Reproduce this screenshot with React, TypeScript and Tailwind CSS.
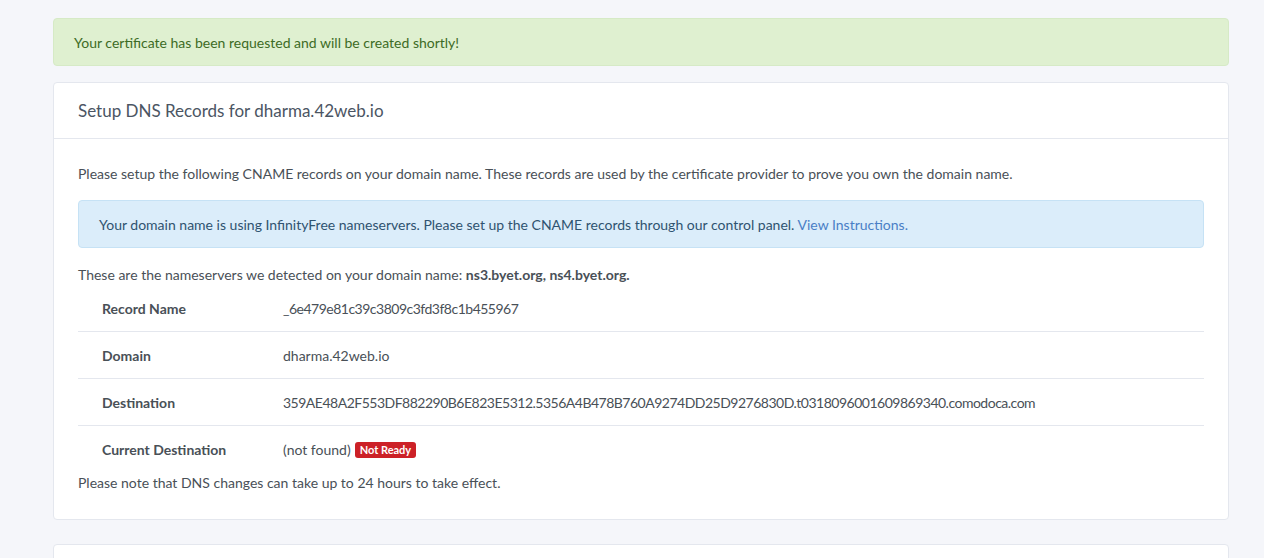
import React from 'react';

const rows: { label: string; value: React.ReactNode; tight?: boolean }[] = [
    { label: 'Record Name', value: '_6e479e81c39c3809c3fd3f8c1b455967', tight: true },
    { label: 'Domain', value: 'dharma.42web.io' },
    {
        label: 'Destination',
        value: '359AE48A2F553DF882290B6E823E5312.5356A4B478B760A9274DD25D9276830D.t0318096001609869340.comodoca.com',
        tight: true,
    },
    {
        label: 'Current Destination',
        value: (
            <span className="flex items-center gap-1">
                (not found)
                <span className="rounded-[3px] bg-[#cc2127] px-[5px] text-[11px] font-bold leading-[16px] text-white">Not Ready</span>
            </span>
        ),
    },
];

const App: React.FC = () => {
    return (
        <div className="min-h-[558px] bg-[#f5f6fa] pl-[53px] pr-[35px] pt-[18px] font-['Lato','Noto_Sans',sans-serif] text-[14px] text-[#495057]">
            {/* success alert */}
            <div className="flex h-[48px] items-center rounded-[4px] border border-[#d6eac6] bg-[#dff0d0] px-[20px] text-[#3d6b25]">
                Your certificate has been requested and will be created shortly!
            </div>

            {/* dns card */}
            <section className="mt-[16px] rounded-[4px] border border-[#e4e7ee] bg-white">
                <div className="flex h-[56px] items-center border-b border-[#e4e7ee] px-[24px] text-[17px] text-[#4b5563]">
                    Setup DNS Records for dharma.42web.io
                </div>
                <div className="px-[24px] pb-[26px] pt-[25px]">
                    <p className="leading-[20px]">
                        Please setup the following CNAME records on your domain name. These records are used by the certificate provider to prove you own the domain name.
                    </p>
                    <div className="mt-[16px] flex h-[48px] items-center rounded-[4px] border border-[#c6e2f5] bg-[#dbedfa] px-[20px] text-[#2f5370]">
                        <span>
                            Your domain name is using InfinityFree nameservers. Please set up the CNAME records through our control panel.{' '}
                            <a href="#" className="text-[#4a7fc6]">View Instructions.</a>
                        </span>
                    </div>
                    <p className="mt-[17px] leading-[20px]">
                        These are the nameservers we detected on your domain name: <b className="font-bold">ns3.byet.org, ns4.byet.org.</b>
                    </p>
                    <div>
                        {rows.map((r, i) => (
                            <div
                                key={r.label}
                                className={`flex h-[47px] items-center ${i < rows.length - 1 ? 'border-b border-[#e4e7ee]' : ''}`}
                            >
                                <div className="w-[205px] shrink-0 pl-[24px] font-bold">{r.label}</div>
                                <div className={r.tight ? 'tracking-[-0.5px]' : ''}>{r.value}</div>
                            </div>
                        ))}
                    </div>
                    <p className="leading-[20px]">Please note that DNS changes can take up to 24 hours to take effect.</p>
                </div>
            </section>

            <section className="mt-[24px] h-[40px] rounded-t-[4px] border border-[#e4e7ee] bg-white" />
        </div>
    );
};

export default App;
